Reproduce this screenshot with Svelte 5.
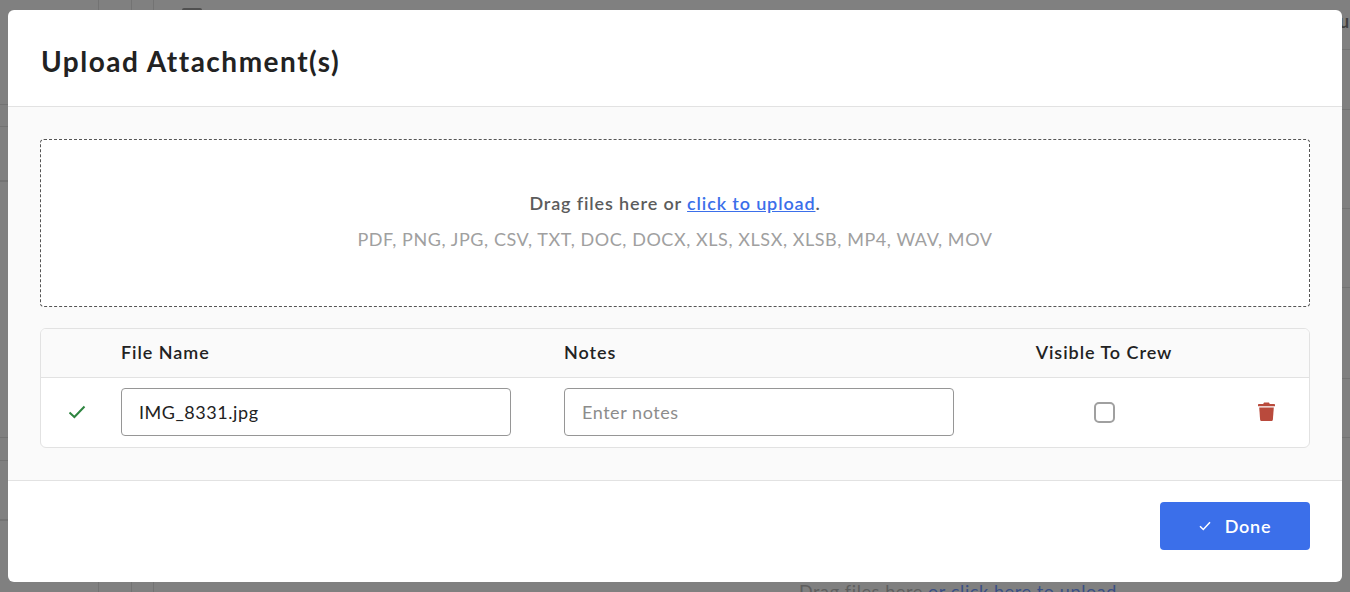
<script>
  let fileName = 'IMG_8331.jpg';
  let notes = '';
  let visibleToCrew = false;

  // rules of the dimmed page that show either side of the dialog
  const leftRules = [104, 126, 180, 437, 460, 519];
  const rightRules = [49, 109, 208, 287, 378, 437];
  const columnRules = [98, 131, 153];
</script>

<div class="page">
  <!-- dimmed page behind the dialog -->
  <div class="behind" aria-hidden="true">
    {#each columnRules as x}
      <i class="vline" style="left: {x}px"></i>
    {/each}
    {#each leftRules as y}
      <i class="hline left" class:thick={y === 180 || y === 519} style="top: {y}px"></i>
    {/each}
    {#each rightRules as y}
      <i class="hline right" style="top: {y}px"></i>
    {/each}
    <i class="tab"></i>
    <span class="edge-letter">u</span>
    <span class="behind-text">Drag files here <b>or click here to upload</b></span>
  </div>

  <div class="modal">
    <header class="modal-head">
      <h1>Upload Attachment(s)</h1>
    </header>

    <div class="modal-body">
      <div class="dropzone">
        <p class="drop-main">Drag files here or <a href="#upload">click to upload</a>.</p>
        <p class="drop-types">PDF, PNG, JPG, CSV, TXT, DOC, DOCX, XLS, XLSX, XLSB, MP4, WAV, MOV</p>
      </div>

      <div class="table">
        <div class="row head">
          <span></span>
          <span>File Name</span>
          <span>Notes</span>
          <span class="center">Visible To Crew</span>
          <span></span>
        </div>
        <div class="row item">
          <svg class="check" viewBox="0 0 18 14" width="18" height="14" aria-hidden="true">
            <path d="M1.5 7.5 6.4 12 16.5 1.5" fill="none" stroke="#2e8540" stroke-width="2" />
          </svg>
          <input type="text" bind:value={fileName} />
          <input type="text" placeholder="Enter notes" bind:value={notes} />
          <div class="center">
            <input class="box" type="checkbox" bind:checked={visibleToCrew} />
          </div>
          <svg class="trash" viewBox="0 0 17 19" width="17" height="19" aria-hidden="true">
            <path d="M6 0.5h5l.8 1.5H16c.6 0 1 .4 1 1v1.2H0V3c0-.6.4-1 1-1h4.2z" fill="#b94a3c" />
            <path d="M1.2 5.4h14.6l-.9 12c-.1.9-.8 1.6-1.7 1.6H3.8c-.9 0-1.6-.7-1.7-1.6z" fill="#b94a3c" />
          </svg>
        </div>
      </div>
    </div>

    <footer class="modal-foot">
      <button class="done" type="button">
        <svg viewBox="0 0 12 10" width="12" height="10" aria-hidden="true">
          <path d="M1 5.2 4.3 8.5 11 1.2" fill="none" stroke="#fff" stroke-width="1.5" />
        </svg>
        Done
      </button>
    </footer>
  </div>
</div>

<style>
  :global(body) {
    margin: 0;
    background: #808080;
  }

  .page {
    position: relative;
    height: 592px;
    padding: 10px 8px;
    box-sizing: border-box;
    overflow: hidden;
    font-family: Lato, "Noto Sans", sans-serif;
    color: #222;
  }

  .behind {
    position: absolute;
    inset: 0;
  }

  .vline {
    position: absolute;
    top: 0;
    bottom: 0;
    width: 1px;
    background: #737373;
  }

  .hline {
    position: absolute;
    width: 8px;
    height: 1px;
    background: #737373;
  }

  .hline.left {
    left: 0;
  }

  .hline.right {
    right: 0;
  }

  .hline.thick {
    height: 2px;
  }

  .tab {
    position: absolute;
    left: 182px;
    top: 8px;
    width: 20px;
    height: 4px;
    border-radius: 2px 2px 0 0;
    background: #505050;
  }

  .edge-letter {
    position: absolute;
    left: 1339px;
    top: 10px;
    font-size: 18px;
    font-weight: 700;
    color: #404040;
  }

  .behind-text {
    position: absolute;
    left: 799px;
    top: 580px;
    font-size: 18px;
    letter-spacing: 0.6px;
    color: #5e5e5e;
    white-space: nowrap;
  }

  .behind-text b {
    font-weight: 400;
    color: #3a4f85;
  }

  .modal {
    position: relative;
    height: 572px;
    background: #fff;
    border-radius: 6px;
    display: flex;
    flex-direction: column;
    overflow: hidden;
  }

  .modal-head {
    height: 96px;
    box-sizing: content-box;
    padding: 0 33px;
    display: flex;
    align-items: center;
    border-bottom: 1px solid #e2e2e2;
    flex: none;
  }

  h1 {
    margin: 6px 0 0;
    font-size: 28px;
    font-weight: 700;
    color: #222;
    letter-spacing: 1.5px;
  }

  .modal-body {
    height: 373px;
    box-sizing: border-box;
    padding: 32px 32px 0;
    background: #fafafa;
    flex: none;
  }

  .dropzone {
    height: 168px;
    box-sizing: border-box;
    padding-bottom: 4px;
    border: 1px dashed #555;
    border-radius: 4px;
    background: #fff;
    display: flex;
    flex-direction: column;
    align-items: center;
    justify-content: center;
    gap: 15px;
  }

  .dropzone p {
    margin: 0;
    line-height: 21px;
  }

  .drop-main {
    font-size: 18px;
    font-weight: 600;
    letter-spacing: 0.87px;
    color: #5c5c5c;
  }

  .drop-main a {
    color: #3b6fea;
  }

  .drop-types {
    font-size: 18px;
    letter-spacing: 0.57px;
    color: #a0a0a0;
  }

  .table {
    margin-top: 21px;
    height: 120px;
    box-sizing: border-box;
    border: 1px solid #e2e2e2;
    border-radius: 6px;
    background: #fff;
    overflow: hidden;
  }

  .row {
    display: grid;
    grid-template-columns: 80px 443px 443px 194px 1fr;
    align-items: center;
  }

  .row.head {
    height: 49px;
    padding-bottom: 2px;
    box-sizing: border-box;
    background: #fafafa;
    border-bottom: 1px solid #e2e2e2;
    font-size: 18px;
    font-weight: 600;
    letter-spacing: 0.95px;
    color: #222;
  }

  .row.item {
    height: 69px;
  }

  .center {
    display: flex;
    justify-content: center;
    white-space: nowrap;
  }

  .check {
    margin-left: 27px;
    margin-top: -2px;
  }

  .row input[type='text'] {
    width: 390px;
    height: 48px;
    box-sizing: border-box;
    margin-top: -1px;
    padding: 0 17px;
    border: 1px solid #969696;
    border-radius: 4px;
    background: #fff;
    font: 400 18px Lato, "Noto Sans", sans-serif;
    letter-spacing: 0.55px;
    color: #222;
    outline: none;
  }

  .row input::placeholder {
    color: #8c8c8c;
    opacity: 1;
  }

  .box {
    appearance: none;
    width: 21px;
    height: 21px;
    box-sizing: border-box;
    margin: 0;
    border: 2px solid #a0a0a0;
    border-radius: 5px;
    background: #fff;
  }

  .trash {
    margin-left: 57px;
    margin-top: -2px;
  }

  .modal-foot {
    flex: 1;
    border-top: 1px solid #e2e2e2;
    display: flex;
    justify-content: flex-end;
    padding: 21px 32px 0;
    align-items: flex-start;
  }

  .done {
    width: 150px;
    height: 48px;
    border: none;
    border-radius: 4px;
    background: #3b6fea;
    color: #fff;
    font: 600 18px Lato, "Noto Sans", sans-serif;
    letter-spacing: 0.7px;
    display: flex;
    align-items: center;
    justify-content: center;
    gap: 14px;
  }
</style>
